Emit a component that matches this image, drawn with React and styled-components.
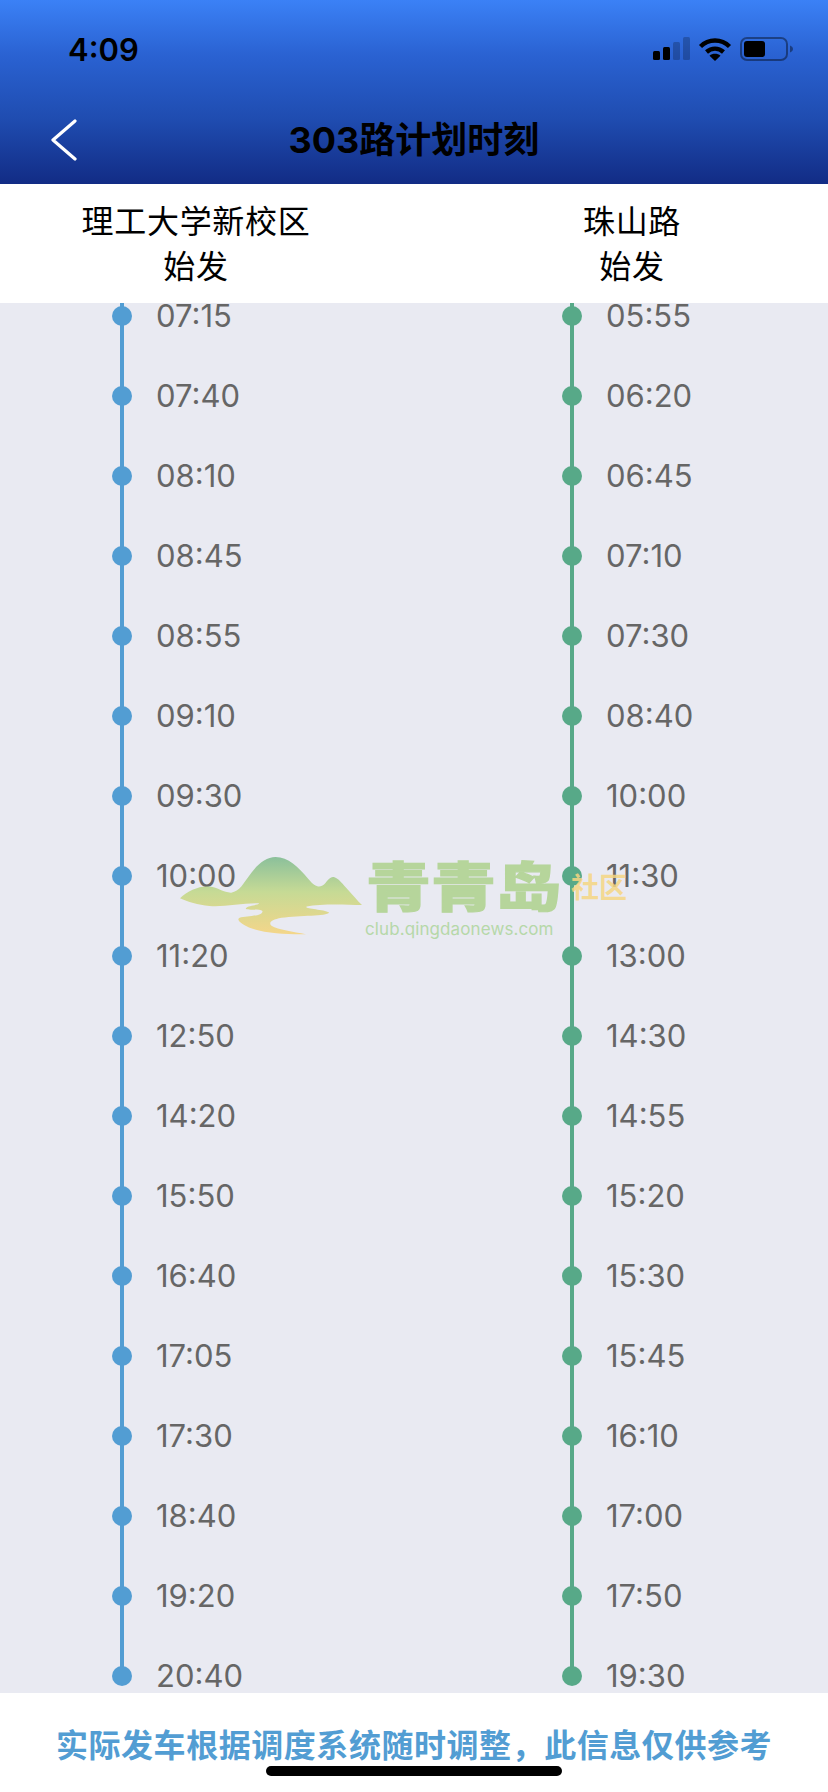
import React from "react"
import styled, { createGlobalStyle } from "styled-components"

const LEFT_TIMES = ["07:15","07:40","08:10","08:45","08:55","09:10","09:30","10:00","11:20","12:50","14:20","15:50","16:40","17:05","17:30","18:40","19:20","20:40"]
const RIGHT_TIMES = ["05:55","06:20","06:45","07:10","07:30","08:40","10:00","11:30","13:00","14:30","14:55","15:20","15:30","15:45","16:10","17:00","17:50","19:30"]

const BLUE = "#529dd3"
const GREEN = "#57a988"
const CJK = `"Inter", "Noto Sans CJK SC", sans-serif`
const NOTICE = "实际发车根据调度系统随时调整\uFF0C此信息仅供参考"

const GlobalStyle = createGlobalStyle`
  html, body {
    margin: 0;
    padding: 0;
    background: #fff;
  }
  * {
    box-sizing: border-box;
  }
`

const Page = styled.div`
  position: relative;
  width: 828px;
  height: 1792px;
  display: flex;
  flex-direction: column;
  overflow: hidden;
  font-family: ${CJK};
`

const Header = styled.header`
  height: 184px;
  flex: none;
  background: linear-gradient(180deg, #3b81f6 0%, #2a62d2 30%, #1f4cb0 65%, #122c85 100%);
`

const StatusBar = styled.div`
  height: 98px;
  padding: 0 34px 0 68px;
  display: flex;
  align-items: center;
  justify-content: space-between;
`

const Clock = styled.span`
  font-size: 31px;
  font-weight: 600;
  color: #000;
`

const StatusIcons = styled.div`
  display: flex;
  align-items: center;
  gap: 8px;
  margin-top: -1px;
`

const NavBar = styled.div`
  position: relative;
  height: 86px;
  display: flex;
  align-items: center;
  justify-content: center;
  padding-bottom: 3px;
`

const BackIcon = styled.svg`
  position: absolute;
  left: 50px;
  top: 21px;
`

const Title = styled.h1`
  margin: 0;
  font-size: 36px;
  font-weight: 700;
  color: #000;
  line-height: 44px;
`

const Origins = styled.div`
  height: 119px;
  flex: none;
  background: #fff;
  display: grid;
  grid-template-columns: 392px 1fr;
  padding-top: 15px;
`

const Origin = styled.div`
  font-size: 32px;
  line-height: 45px;
  letter-spacing: 0.7px;
  color: #000;
  text-align: center;
  width: ${p => p.$width}px;
`

const Board = styled.div`
  height: 1390px;
  flex: none;
  background: #e9eaf2;
  overflow: hidden;
  display: grid;
  grid-template-columns: 450px 1fr;
`

const Column = styled.ul`
  list-style: none;
  margin: -27px 0 0;
  padding: 0 0 0 112px;
`

const Row = styled.li`
  position: relative;
  height: 80px;
  display: flex;
  align-items: center;
  gap: 24px;

  &::before {
    content: "";
    position: absolute;
    left: 8px;
    top: 0;
    width: 4px;
    height: ${p => (p.$last ? "50%" : "100%")};
    background: ${p => p.$color};
  }
`

const Dot = styled.span`
  position: relative;
  width: 20px;
  height: 20px;
  flex: none;
  border-radius: 50%;
  background: ${p => p.$color};
`

const Time = styled.span`
  font-size: 31px;
  line-height: 40px;
  color: #666;
`

const Footer = styled.footer`
  position: relative;
  flex: 1;
  background: #fff;
  display: flex;
  justify-content: center;
  padding-top: 27px;
`

const Notice = styled.p`
  margin: 0;
  font-family: "Noto Sans CJK SC", sans-serif;
  font-size: 32px;
  line-height: 46px;
  font-weight: 700;
  letter-spacing: 0.55px;
  color: ${BLUE};
  white-space: nowrap;
`

const HomeBar = styled.div`
  position: absolute;
  left: 266px;
  top: 73px;
  width: 296px;
  height: 10px;
  border-radius: 5px;
  background: #000;
`

const Watermark = styled.div`
  position: absolute;
  left: 180px;
  top: 856px;
  width: 460px;
  height: 90px;
  pointer-events: none;
`

const Mountain = styled.svg`
  position: absolute;
  left: 0;
  top: 0;
`

const BrandName = styled.div`
  position: absolute;
  left: 186px;
  top: 3px;
  font-size: 65px;
  line-height: 70px;
  font-weight: 900;
  white-space: nowrap;
  transform: scaleY(0.82);
  transform-origin: top left;
  -webkit-text-stroke: 1.5px #b6d59b;
  color: #b6d59b;
`

const BrandUrl = styled.div`
  position: absolute;
  left: 185px;
  top: 62px;
  font-size: 17px;
  line-height: 22px;
  letter-spacing: 0.1px;
  color: #b6d8a9;
`

const BrandTag = styled.div`
  position: absolute;
  left: 391px;
  top: 14px;
  font-size: 28px;
  line-height: 36px;
  font-weight: 700;
  color: rgba(245, 214, 130, 0.85);
  white-space: nowrap;
`

const Signal = () => (
  <svg width="38" height="24" viewBox="0 0 38 24">
    <rect x="1" y="14" width="7" height="9" rx="1.5" fill="#000" />
    <rect x="11" y="10" width="7" height="13" rx="1.5" fill="#000" />
    <rect x="21" y="5" width="7" height="18" rx="1.5" fill="#000" opacity="0.22" />
    <rect x="31" y="0" width="7" height="23" rx="1.5" fill="#000" opacity="0.22" />
  </svg>
)

const Wifi = () => (
  <svg width="34" height="24" viewBox="0 0 34 24" fill="none" stroke="#000" strokeWidth="4.4">
    <path d="M2.5 9.5C10.5 1.5 23.5 1.5 31.5 9.5" />
    <path d="M8.5 15C13.5 10.5 20.5 10.5 25.5 15" />
    <path d="M17 24L11.5 18.7C14.5 16.2 19.5 16.2 22.5 18.7Z" fill="#000" stroke="none" />
  </svg>
)

const Battery = () => (
  <svg width="54" height="24" viewBox="0 0 54 24">
    <rect x="1" y="1" width="46" height="22" rx="6" fill="none" stroke="#000" strokeOpacity="0.4" strokeWidth="2" />
    <rect x="4" y="4" width="21" height="16" rx="3" fill="#000" />
    <path d="M50 8.5C52 9.5 53 10.5 53 12C53 13.5 52 14.5 50 15.5Z" fill="#000" fillOpacity="0.4" />
  </svg>
)

const Schedule = ({ times, color }) => (
  <Column>
    {times.map((time, i) => (
      <Row key={time} $color={color} $last={i === times.length - 1}>
        <Dot $color={color} />
        <Time>{time}</Time>
      </Row>
    ))}
  </Column>
)

const App = () => (
  <Page>
    <GlobalStyle />
    <Header>
      <StatusBar>
        <Clock>4:09</Clock>
        <StatusIcons>
          <Signal />
          <Wifi />
          <Battery />
        </StatusIcons>
      </StatusBar>
      <NavBar>
        <BackIcon width="28" height="44" viewBox="0 0 28 44" fill="none" stroke="#fff" strokeWidth="3.2" strokeLinecap="round" strokeLinejoin="round">
          <path d="M25 2L3 21L25 40" />
        </BackIcon>
        <Title>303路计划时刻</Title>
      </NavBar>
    </Header>
    <Origins>
      <Origin $width={392}>
        理工大学新校区
        <br />
        始发
      </Origin>
      <Origin $width={480}>
        珠山路
        <br />
        始发
      </Origin>
    </Origins>
    <Board>
      <Schedule times={LEFT_TIMES} color={BLUE} />
      <Schedule times={RIGHT_TIMES} color={GREEN} />
    </Board>
    <Footer>
      <Notice>{NOTICE}</Notice>
      <HomeBar />
    </Footer>
    <Watermark>
      <Mountain width="182" height="80" viewBox="62 85 543 232">
        <defs>
          <linearGradient id="hill" x1="0" y1="0" x2="0" y2="1">
            <stop offset="0" stopColor="#8bc09b" />
            <stop offset="0.45" stopColor="#c6da95" />
            <stop offset="1" stopColor="#f4d68a" />
          </linearGradient>
        </defs>
        <path
          fill="url(#hill)"
          d="M62 208C85 185 120 170 150 173C175 176 195 192 215 191C240 188 250 165 275 132C295 105 320 85 347 85C385 85 415 115 445 150C460 168 470 174 482 172C497 168 503 145 518 144C535 144 550 170 605 228C550 226 480 224 440 232C430 240 490 240 507 250C500 262 420 258 365 266C335 272 325 280 335 290C355 302 400 308 438 315C380 316 300 312 262 292C240 282 230 270 240 266C260 260 310 262 308 246C300 238 260 245 258 238C265 228 295 230 298 223C250 222 190 235 150 231C115 228 85 218 62 208Z"
        />
      </Mountain>
      <BrandName>青青岛</BrandName>
      <BrandUrl>club.qingdaonews.com</BrandUrl>
      <BrandTag>社区</BrandTag>
    </Watermark>
  </Page>
)

export default App
